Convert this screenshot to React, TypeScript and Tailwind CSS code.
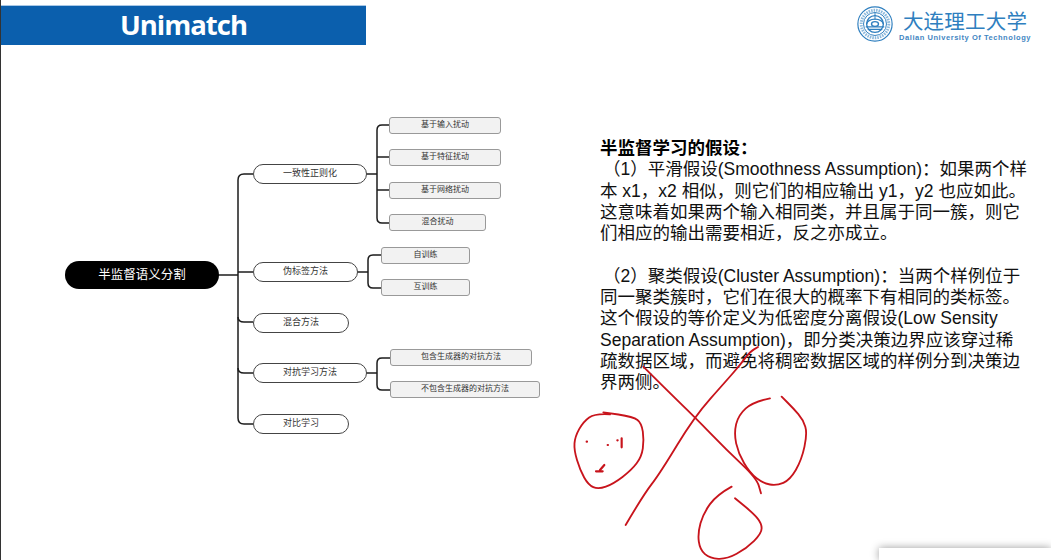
const cjk = "font-['Liberation_Sans','Noto_Sans_CJK_SC',sans-serif]";

const pills = [
  { label: "一致性正则化", pos: "left-[252px] top-[119px] w-[114px] h-[20px]" },
  { label: "伪标签方法", pos: "left-[252px] top-[217px] w-[105px] h-[20px]" },
  { label: "混合方法", pos: "left-[252px] top-[268px] w-[96px] h-[20px]" },
  { label: "对抗学习方法", pos: "left-[252px] top-[318px] w-[114px] h-[20px]" },
  { label: "对比学习", pos: "left-[252px] top-[369px] w-[96px] h-[20px]" },
];

const leaves = [
  { label: "基于输入扰动", pos: "left-[388px] top-[72px] w-[112px]" },
  { label: "基于特征扰动", pos: "left-[388px] top-[104px] w-[112px]" },
  { label: "基于网络扰动", pos: "left-[388px] top-[137px] w-[112px]" },
  { label: "混合扰动", pos: "left-[388px] top-[169px] w-[97px]" },
  { label: "自训练", pos: "left-[380px] top-[202px] w-[89px]" },
  { label: "互训练", pos: "left-[380px] top-[234px] w-[89px]" },
  { label: "包含生成器的对抗方法", pos: "left-[389px] top-[304px] w-[142px]" },
  { label: "不包含生成器的对抗方法", pos: "left-[389px] top-[336px] w-[150px]" },
];

const wires = [
  "M218 275H238",
  "M253 174H244Q238 174 238 180V418Q238 424 244 424H253",
  "M238 272H253",
  "M238 317Q238 322 244 322H253",
  "M238 368Q238 373 244 373H253",
  "M366 174H377",
  "M389 125H382Q377 125 377 130V218Q377 223 382 223H389",
  "M377 157H389",
  "M377 190H389",
  "M357 272H368",
  "M381 255H373Q368 255 368 260V283Q368 288 373 288H381",
  "M366 373H377",
  "M390 358H382Q377 358 377 363V385Q377 390 382 390H390",
];

const lines = [
  { text: "（1）平滑假设(Smoothness Assumption)：如果两个样", indent: true },
  { text: "本 x1，x2 相似，则它们的相应输出 y1，y2 也应如此。" },
  { text: "这意味着如果两个输入相同类，并且属于同一簇，则它" },
  { text: "们相应的输出需要相近，反之亦成立。" },
  { text: "\u00a0" },
  { text: "（2）聚类假设(Cluster Assumption)：当两个样例位于", indent: true },
  { text: "同一聚类簇时，它们在很大的概率下有相同的类标签。" },
  { text: "这个假设的等价定义为低密度分离假设(Low Sensity" },
  { text: "Separation Assumption)，即分类决策边界应该穿过稀" },
  { text: "疏数据区域，而避免将稠密数据区域的样例分到决策边" },
  { text: "界两侧。" },
];

// red pen strokes, in coordinates of a 3x crop starting at (560,370)
const strokes: number[][][] = [
  [[150, 133], [105, 130], [70, 155], [45, 200], [42, 240], [60, 300], [85, 345], [115, 358], [160, 342], [215, 300], [245, 260], [252, 210], [245, 160], [220, 140], [130, 127]],
  [[630, 85], [580, 95], [535, 135], [522, 190], [535, 250], [570, 310], [610, 340], [650, 347], [690, 330], [725, 270], [742, 190], [730, 150], [700, 115], [665, 80]],
  [[515, 350], [470, 375], [430, 430], [413, 490], [420, 540], [450, 565], [500, 568], [560, 535], [605, 490], [605, 460], [580, 430], [525, 385]],
  [[250, -10], [320, 60], [403, 140], [500, 240], [590, 325], [603, 370]],
  [[197, 465], [250, 375], [300, 310], [403, 140], [501, 30], [540, -15], [570, -55], [594, -69]],
];

function smooth(pts: number[][]) {
  let d = `M${pts[0][0]} ${pts[0][1]}`;
  for (let i = 1; i < pts.length - 1; i++) {
    const mx = (pts[i][0] + pts[i + 1][0]) / 2;
    const my = (pts[i][1] + pts[i + 1][1]) / 2;
    d += `Q${pts[i][0]} ${pts[i][1]} ${mx} ${my}`;
  }
  const last = pts[pts.length - 1];
  return d + `L${last[0]} ${last[1]}`;
}

function Seal() {
  return (
    <svg width="36" height="36" viewBox="0 0 37 37" fill="none" stroke="#2f7fbf">
      <circle cx="18.5" cy="18.5" r="17.6" strokeWidth="1.2" />
      <circle cx="18.5" cy="18.5" r="14.2" strokeWidth="3" strokeDasharray="1.6 1" opacity="0.55" />
      <circle cx="18.5" cy="18.5" r="11.8" strokeWidth="1" />
      <circle cx="18.5" cy="18.5" r="8.6" strokeWidth="1.4" />
      <path d="M10 18.5a8.5 5 0 0 1 17 0" strokeWidth="1.4" />
      <ellipse cx="18.5" cy="18.5" rx="3.6" ry="2.4" strokeWidth="1.4" />
      <path d="M9 21.5H28M11 24H26" strokeWidth="1.4" />
      <path d="M18.5 7V14" strokeWidth="1" />
    </svg>
  );
}

export default function App() {
  return (
    <div className={`relative w-[1051px] h-[560px] overflow-hidden bg-white border-l border-[#333] ${cjk}`}>
      <header className="flex justify-between pt-[5px]">
        <div className="w-[365px] h-[40px] bg-[#0b5fad] border-t border-[#a9c8e6] flex items-center justify-center pb-[2px]">
          <span className="font-['Open_Sans',sans-serif] font-bold text-[27.5px] tracking-[-1px] leading-none text-white">Unimatch</span>
        </div>
        <div className="flex gap-[6px] pr-[20px] pt-[1px] items-start">
          <Seal />
          <div className="flex flex-col items-center pt-[1px]">
            <span className="text-[20.5px] leading-[26px] tracking-[0.2px] text-[#2f7fbf] font-['Noto_Sans_CJK_SC',sans-serif]">大连理工大学</span>
            <span className="text-[7.5px] leading-[10px] font-bold tracking-[0.55px] text-[#3f86c2] whitespace-nowrap font-['Liberation_Sans',sans-serif]">Dalian University Of Technology</span>
          </div>
        </div>
      </header>

      <main className="flex">
        <div className="relative w-[599px] h-[515px] shrink-0">
          <svg className="absolute left-0 top-0" width="599" height="515" viewBox="1 45 599 515" fill="none" stroke="#1c1c1c" strokeWidth="1.5">
            {wires.map((d) => (
              <path key={d} d={d} />
            ))}
          </svg>
          <div className="absolute left-[64px] top-[216px] w-[154px] h-[28px] rounded-full bg-black text-white text-[12.5px] flex items-center justify-center">
            半监督语义分割
          </div>
          {pills.map((p) => (
            <div key={p.label} className={`absolute ${p.pos} rounded-full bg-white border border-[#444] text-[9px] text-[#333] flex items-center justify-center`}>
              {p.label}
            </div>
          ))}
          {leaves.map((l) => (
            <div key={l.label} className={`absolute ${l.pos} h-[17px] rounded-[3px] bg-[#f2f2f2] border border-[#999] text-[8px] text-[#333] flex justify-center pt-[1px] leading-[11px]`}>
              {l.label}
            </div>
          ))}
        </div>

        <section className="pt-[93px] text-[17.5px] leading-[21.3px] text-[#111] whitespace-nowrap">
          <h2 className="font-bold text-black">半监督学习的假设：</h2>
          {lines.map((line, i) => (
            <p key={i} className={line.indent ? "pl-[3px]" : ""}>{line.text}</p>
          ))}
        </section>
      </main>

      <svg className="absolute left-[-1px] top-0 pointer-events-none" width="1051" height="560" viewBox="0 0 1051 560" fill="none">
        <g transform="translate(560 370) scale(0.3333)" stroke="#c8141c" strokeWidth="5.5" strokeLinecap="round" strokeLinejoin="round">
          {strokes.map((s, i) => (
            <path key={i} d={smooth(s)} />
          ))}
          <path d="M80 215h1M143 225h1M172 211h1M185 205V232M133 285L120 300M108 304H128" strokeWidth="6.5" />
        </g>
      </svg>

      <div className="absolute right-0 bottom-0 w-[172px] h-[12px] bg-white shadow-[0_0_8px_rgba(0,0,0,0.4)]" />
    </div>
  );
}
